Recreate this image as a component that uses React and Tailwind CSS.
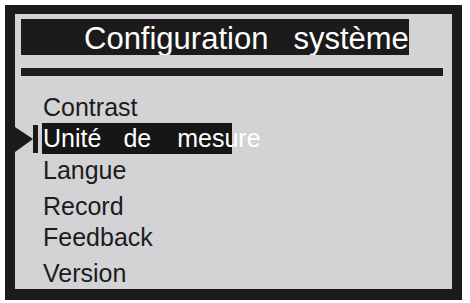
/**
 * Configuration screen - handheld device menu (system settings)
 */

const ITEMS = [
  { label: 'Contrast', mt: 'mt-[16px]' },
  { label: 'Unité de mesure', mt: 'mt-0', selected: true },
  { label: 'Langue', mt: 'mt-[1px]' },
  { label: 'Record', mt: 'mt-[5px]' },
  { label: 'Feedback', mt: 'mt-0' },
  { label: 'Version', mt: 'mt-[5px]' },
];

function SelectArrow() {
  return (
    <svg width="24" height="31" viewBox="0 0 24 31" className="shrink-0 text-[#1a1a1a]">
      <path d="M0 4L18 16L0 29Z" fill="currentColor" />
      <rect x="18" y="2" width="5" height="28" fill="currentColor" />
    </svg>
  );
}

function MenuRow({ item }) {
  if (item.selected) {
    return (
      <div className={`flex h-[31px] items-center ${item.mt}`}>
        <SelectArrow />
        <div className="ml-[3px] h-[31px] whitespace-nowrap bg-[linear-gradient(to_right,#161616_190px,transparent_190px)] pl-[1px] leading-[31px] text-white">
          <span>Unité</span>
          <span className="ml-[22px]">de</span>
          <span className="ml-[26px]">mesure</span>
        </div>
      </div>
    );
  }

  return (
    <div className={`h-[31px] pl-[28px] leading-[31px] text-[#1c1c1c] ${item.mt}`}>
      {item.label}
    </div>
  );
}

export default function App() {
  return (
    <div className="h-[303px] w-[470px] bg-white pl-[5px] pt-[5px] font-['Liberation_Sans',Arial,sans-serif]">
      <div className="h-[295px] w-[457px] bg-[#1b1b1b] pb-[11px] pl-[10px] pr-[10px] pt-[9px]">
        <div className="flex h-full w-full flex-col bg-[#d3d3d5]">
          {/* title bar */}
          <div className="ml-[6px] mt-[5px] h-[36px] w-[388px] overflow-hidden whitespace-nowrap bg-[#1c1a1a] pl-[63px] text-[31px] leading-[40px] text-white">
            <span>Configuration</span>
            <span className="ml-[25px]">système</span>
          </div>

          <div className="ml-[6px] mt-[13px] h-[8px] w-[422px] bg-[#1e1e1e]" />

          <div className="flex flex-col text-[25px]">
            {ITEMS.map((item) => (
              <MenuRow key={item.label} item={item} />
            ))}
          </div>
        </div>
      </div>
    </div>
  );
}
